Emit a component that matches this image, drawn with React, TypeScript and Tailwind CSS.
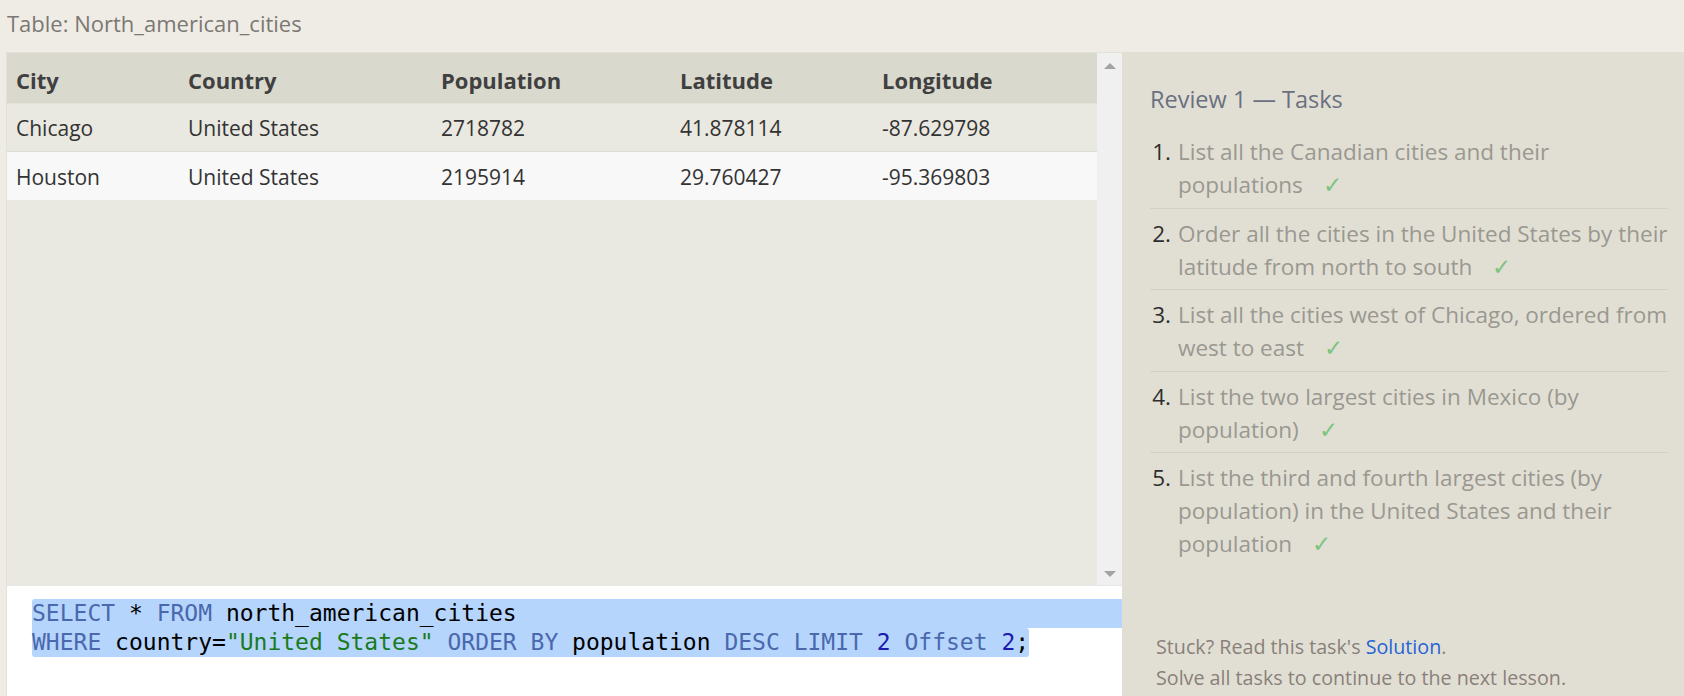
import React from "react";

const rows = [
  ["Chicago", "United States", "2718782", "41.878114", "-87.629798"],
  ["Houston", "United States", "2195914", "29.760427", "-95.369803"],
];

const colW = ["w-[172px]", "w-[253px]", "w-[239px]", "w-[202px]", "flex-1"];

const tasks: string[][] = [
  ["List all the Canadian cities and their", "populations"],
  ["Order all the cities in the United States by their", "latitude from north to south"],
  ["List all the cities west of Chicago, ordered from", "west to east"],
  ["List the two largest cities in Mexico (by", "population)"],
  ["List the third and fourth largest cities (by", "population) in the United States and their", "population"],
];

function Kw({ children }: { children: React.ReactNode }) {
  return <span className="text-[#4a68ad]">{children}</span>;
}

export default function App() {
  return (
    <div className="h-[696px] w-[1684px] overflow-hidden bg-[#efece5] flex flex-col font-['Open_Sans',sans-serif]">
      <div className="h-[52px] shrink-0 pl-[7px] pb-[5px] flex items-center text-[22px] text-[#7b7873]">
        Table: North_american_cities
      </div>
      <div className="flex flex-1 min-h-0">
        <div className="ml-[6px] w-[1116px] shrink-0 flex flex-col border-t border-l border-[#e3e1d9]">
          <div className="h-[532px] shrink-0 flex bg-[#e9e8e1]">
            <div className="flex-1 flex flex-col">
              <div className="flex h-[51px] pt-[4px] bg-[#dad9cd] items-center font-bold text-[22px] text-[#404040] border-b border-[#e2e1da]">
                {["City", "Country", "Population", "Latitude", "Longitude"].map((h, i) => (
                  <div key={h} className={`${colW[i]} pl-[9px]`}>{h}</div>
                ))}
              </div>
              {rows.map((r, ri) => (
                <div
                  key={ri}
                  className={`flex h-[48px] pt-[3px] items-center text-[21px] text-[#333333] ${ri === 0 ? "bg-[#e9e8e1] border-b border-[#dcdcd6]" : "bg-[#f8f8f8]"}`}
                >
                  {r.map((c, i) => (
                    <div key={i} className={`${colW[i]} pl-[9px]`}>{c}</div>
                  ))}
                </div>
              ))}
            </div>
            <div className="w-[25px] bg-[#f0f0f0] flex flex-col items-center justify-between pt-[10px] pb-[8px]">
              <div className="w-0 h-0 border-l-[6px] border-r-[6px] border-b-[6px] border-l-transparent border-r-transparent border-b-[#a3a3a3]" />
              <div className="w-0 h-0 border-l-[6px] border-r-[6px] border-t-[6px] border-l-transparent border-r-transparent border-t-[#a3a3a3]" />
            </div>
          </div>
          <div className="flex-1 bg-white border-t border-[#e6e6e6] pt-[13px] font-['DejaVu_Sans_Mono',monospace] text-[23px] leading-[29px] text-black whitespace-pre">
            <div className="pl-[25px]">
              <div className="bg-[#b5d5fc] rounded-tl-[3px]">
                <Kw>SELECT</Kw> * <Kw>FROM</Kw> north_american_cities
              </div>
              <div className="bg-[#b5d5fc] w-fit rounded-b-[3px] rounded-tr-[3px]">
                <Kw>WHERE</Kw> country=<span className="text-[#1b7a1b]">"United States"</span> <Kw>ORDER BY</Kw> population <Kw>DESC</Kw> <Kw>LIMIT</Kw> <span className="text-[#1b1bb0]">2</span> <Kw>Offset</Kw> <span className="text-[#1b1bb0]">2</span>;
              </div>
            </div>
          </div>
        </div>
        <div className="flex-1 bg-[#e1dfd4] flex flex-col pl-[28px] pr-[17px] pt-[31px] pb-[3px]">
          <div className="text-[23.5px] text-[#6a7080] leading-[32px]">Review 1 — Tasks</div>
          <ol className="mt-[20px]">
            {tasks.map((t, i) => (
              <li
                key={i}
                className={`flex text-[22.5px] leading-[33px] ${i < tasks.length - 1 ? "border-b border-[#d3d1c6]" : ""} ${i === 0 ? "pb-[6.5px]" : "pt-[8px] pb-[6.5px]"}`}
              >
                <span className="w-[28px] shrink-0 text-right pr-[7px] text-[#2e2e2e] whitespace-nowrap">{i + 1}.</span>
                <span className="text-[#9a9890]">
                  {t.map((line, li) => (
                    <div key={li} className="whitespace-nowrap">
                      {line}
                      {li === t.length - 1 && <span className="ml-[20px] text-[#7cc47e]">✓</span>}
                    </div>
                  ))}
                </span>
              </li>
            ))}
          </ol>
          <div className="mt-auto pl-[6px] text-[19.7px] leading-[31px] text-[#8a8079]">
            <div>
              Stuck? Read this task's <span className="text-[#2563d6]">Solution</span>.
            </div>
            <div>Solve all tasks to continue to the next lesson.</div>
          </div>
        </div>
      </div>
    </div>
  );
}
